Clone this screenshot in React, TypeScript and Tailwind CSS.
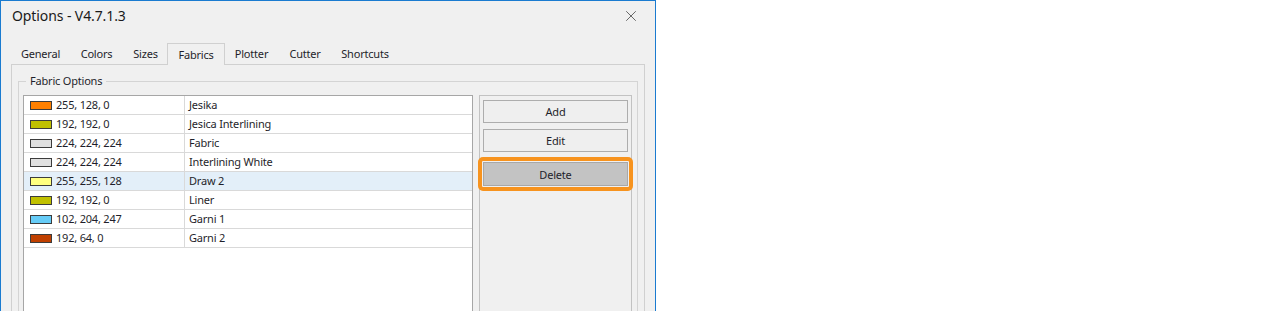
import { X } from "lucide-react";

const tabs = [
  { label: "General", w: "w-[57px]" },
  { label: "Colors", w: "w-[55px]" },
  { label: "Sizes", w: "w-[43px]" },
  { label: "Fabrics", w: "w-[58px]", active: true },
  { label: "Plotter", w: "w-[53px]" },
  { label: "Cutter", w: "w-[54px]" },
  { label: "Shortcuts", w: "w-[66px]" },
];

const fabrics = [
  { rgb: "255, 128, 0", color: "bg-[#ff8000]", name: "Jesika" },
  { rgb: "192, 192, 0", color: "bg-[#c0c000]", name: "Jesica Interlining" },
  { rgb: "224, 224, 224", color: "bg-[#e0e0e0]", name: "Fabric" },
  { rgb: "224, 224, 224", color: "bg-[#e0e0e0]", name: "Interlining White" },
  { rgb: "255, 255, 128", color: "bg-[#ffff80]", name: "Draw 2", selected: true },
  { rgb: "192, 192, 0", color: "bg-[#c0c000]", name: "Liner" },
  { rgb: "102, 204, 247", color: "bg-[#66ccf7]", name: "Garni 1" },
  { rgb: "192, 64, 0", color: "bg-[#c04000]", name: "Garni 2" },
];

export default function App() {
  return (
    <div
      className="w-[1270px] h-[311px] bg-white flex overflow-hidden text-[11px] tracking-[-0.2px] text-[#1f1f2b]"
      style={{ fontFamily: '"Noto Sans", "Open Sans", sans-serif' }}
    >
      <div className="w-[656px] h-[320px] border border-[#1a7bd0] bg-[#f0f0f0] flex flex-col shrink-0">
        {/* title bar */}
        <div className="h-[42px] flex items-start justify-between pl-[11px] pr-[15px] pt-[4px]">
          <span className="text-[14px] text-[#1a1a1a] tracking-[-0.1px]">Options - V4.7.1.3</span>
          <X className="w-[18px] h-[18px] mt-[2px] text-[#3a3a3a]" strokeWidth={1} />
        </div>

        {/* tabs */}
        <div className="flex pl-[11px] h-[21px] items-end">
          {tabs.map((t) =>
            t.active ? (
              <div
                key={t.label}
                className={`${t.w} h-[22px] -mb-px border border-b-0 border-[#d0d0d0] bg-[#f0f0f0] flex items-center justify-center pt-[2px] relative z-10`}
              >
                {t.label}
              </div>
            ) : (
              <div key={t.label} className={`${t.w} h-[20px] flex items-center justify-center pt-[1px]`}>
                {t.label}
              </div>
            )
          )}
        </div>

        {/* tab panel */}
        <div className="ml-[10px] mr-[10px] flex-1 border border-[#d0d0d0] pt-[9px] px-[6px] flex flex-col">
          <div className="relative flex-1 border border-[#d4d4d4] mt-[7px] px-[4px] pt-[13px] flex gap-[6px]">
            <span className="absolute -top-[9px] left-[7px] px-[4px] bg-[#f0f0f0] leading-[16px]">
              Fabric Options
            </span>

            {/* list */}
            <div className="w-[450px] border border-[#a6a6a6] bg-white self-stretch">
              {fabrics.map((f, i) => (
                <div
                  key={i}
                  className={`flex h-[19px] border-b border-[#d9d9d9] ${f.selected ? "bg-[#e3eff9]" : ""}`}
                >
                  <div className="w-[161px] border-r border-[#d9d9d9] flex items-center pl-[6px] gap-[4px]">
                    <span className={`w-[22px] h-[9px] border border-[#3c3c3c] ${f.color}`} />
                    <span>{f.rgb}</span>
                  </div>
                  <div className="flex items-center pl-[4px]">{f.name}</div>
                </div>
              ))}
            </div>

            {/* buttons */}
            <div className="w-[153px] border border-[#c2c2c2] px-[3px] pt-[4px] flex flex-col">
              <button className="h-[23px] border border-[#adadad] bg-[#efefef] pt-px">Add</button>
              <button className="h-[23px] mt-[6px] border border-[#adadad] bg-[#efefef] pt-px">Edit</button>
              <div className="relative mt-[10px]">
                <span className="absolute -inset-[5px] border-[4px] border-[#f7931e] rounded-[5px]" />
                <button className="w-full h-[24px] border border-[#a8a8a8] bg-[#c3c3c3] pt-[2px]">Delete</button>
              </div>
            </div>
          </div>
        </div>
      </div>
    </div>
  );
}
